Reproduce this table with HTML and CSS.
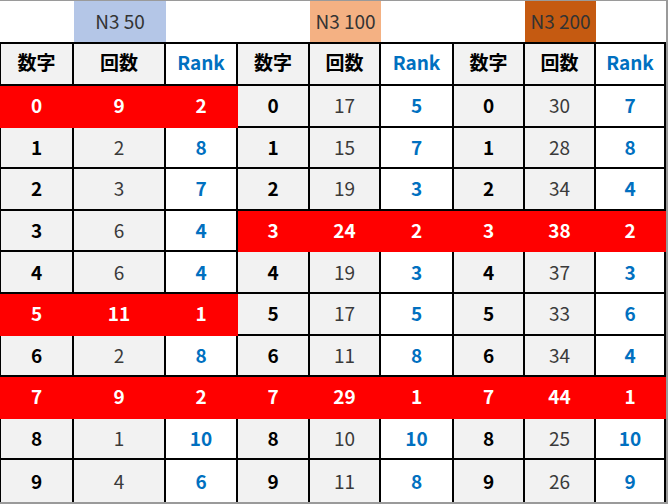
FILE: index.html
```html
<!DOCTYPE html>
<html lang="ja">
<head>
<meta charset="utf-8">
<title>N3</title>
<link rel="stylesheet" href="styles.css">
</head>
<body>
<div class="sheet">
  <div class="cap"></div><div class="cap c50">N3 50</div><div class="cap"></div>
  <div class="cap"></div><div class="cap c100">N3 100</div><div class="cap"></div>
  <div class="cap"></div><div class="cap c200">N3 200</div><div class="cap"></div>

  <div class="cell first lbl">数字</div><div class="cell lbl">回数</div><div class="cell rank hd">Rank</div>
  <div class="cell lbl">数字</div><div class="cell lbl">回数</div><div class="cell rank hd">Rank</div>
  <div class="cell lbl">数字</div><div class="cell lbl">回数</div><div class="cell rank hd">Rank</div>

  <div class="cell first hot">0</div><div class="cell hot">9</div><div class="cell hot">2</div>
  <div class="cell num">0</div><div class="cell cnt">17</div><div class="cell rank">5</div>
  <div class="cell num">0</div><div class="cell cnt">30</div><div class="cell rank">7</div>

  <div class="cell first num">1</div><div class="cell cnt">2</div><div class="cell rank">8</div>
  <div class="cell num">1</div><div class="cell cnt">15</div><div class="cell rank">7</div>
  <div class="cell num">1</div><div class="cell cnt">28</div><div class="cell rank">8</div>

  <div class="cell first num">2</div><div class="cell cnt">3</div><div class="cell rank">7</div>
  <div class="cell num">2</div><div class="cell cnt">19</div><div class="cell rank">3</div>
  <div class="cell num">2</div><div class="cell cnt">34</div><div class="cell rank">4</div>

  <div class="cell first num">3</div><div class="cell cnt">6</div><div class="cell rank">4</div>
  <div class="cell hot">3</div><div class="cell hot">24</div><div class="cell hot">2</div>
  <div class="cell hot">3</div><div class="cell hot">38</div><div class="cell hot">2</div>

  <div class="cell first num">4</div><div class="cell cnt">6</div><div class="cell rank">4</div>
  <div class="cell num">4</div><div class="cell cnt">19</div><div class="cell rank">3</div>
  <div class="cell num">4</div><div class="cell cnt">37</div><div class="cell rank">3</div>

  <div class="cell first hot">5</div><div class="cell hot">11</div><div class="cell hot">1</div>
  <div class="cell num">5</div><div class="cell cnt">17</div><div class="cell rank">5</div>
  <div class="cell num">5</div><div class="cell cnt">33</div><div class="cell rank">6</div>

  <div class="cell first num">6</div><div class="cell cnt">2</div><div class="cell rank">8</div>
  <div class="cell num">6</div><div class="cell cnt">11</div><div class="cell rank">8</div>
  <div class="cell num">6</div><div class="cell cnt">34</div><div class="cell rank">4</div>

  <div class="cell first hot">7</div><div class="cell hot">9</div><div class="cell hot">2</div>
  <div class="cell hot">7</div><div class="cell hot">29</div><div class="cell hot">1</div>
  <div class="cell hot">7</div><div class="cell hot">44</div><div class="cell hot">1</div>

  <div class="cell first num">8</div><div class="cell cnt">1</div><div class="cell rank">10</div>
  <div class="cell num">8</div><div class="cell cnt">10</div><div class="cell rank">10</div>
  <div class="cell num">8</div><div class="cell cnt">25</div><div class="cell rank">10</div>

  <div class="cell first num last">9</div><div class="cell cnt last">4</div><div class="cell rank last">6</div>
  <div class="cell num last">9</div><div class="cell cnt last">11</div><div class="cell rank last">8</div>
  <div class="cell num last">9</div><div class="cell cnt last">26</div><div class="cell rank last">9</div>
</div>
</body>
</html>
```

FILE: styles.css
```css
html, body {
  margin: 0;
  padding: 0;
  background: #ffffff;
}

.sheet {
  width: 666px;
  height: 501px;
  border-top: 1px solid #9a9a9a;
  border-right: 2px solid #9a9a9a;
  border-bottom: 2px solid #9a9a9a;
  display: grid;
  grid-template-columns: 74px 92px 72px 72px 71px 73px 71px 71px 70px;
  grid-template-rows: 43px 42px repeat(10, 41.6px);
  font-family: "Noto Sans CJK JP", "Noto Sans", sans-serif;
  font-size: 19px;
  overflow: hidden;
}

.cap {
  box-sizing: border-box;
  border-bottom: 2px solid #000;
  padding-bottom: 2px;
  display: flex;
  align-items: center;
  justify-content: center;
  color: #333333;
  font-weight: 400;
  line-height: 1;
}

.c50 { background: #b4c6e7; }
.c100 { background: #f4b183; }
.c200 { background: #c55a11; }

.cell {
  box-sizing: border-box;
  border-right: 2px solid #000;
  border-bottom: 2px solid #000;
  padding-bottom: 2px;
  display: flex;
  align-items: center;
  justify-content: center;
  line-height: 1;
}

.first { border-left: 1px solid #000; }
.last { border-bottom: none; }

.lbl {
  background: #f2f2f2;
  color: #000;
  font-weight: 700;
  padding-bottom: 5px;
}

.num {
  background: #f2f2f2;
  color: #000;
  font-weight: 700;
}

.cnt {
  background: #f2f2f2;
  color: #3a3a3a;
  font-weight: 400;
}

.rank {
  background: #ffffff;
  color: #0070c0;
  font-weight: 700;
}

.rank.hd {
  padding-bottom: 5px;
}

.hot {
  background: #ff0000;
  border-color: #ff0000;
  color: #ffffff;
  font-weight: 700;
}
```
